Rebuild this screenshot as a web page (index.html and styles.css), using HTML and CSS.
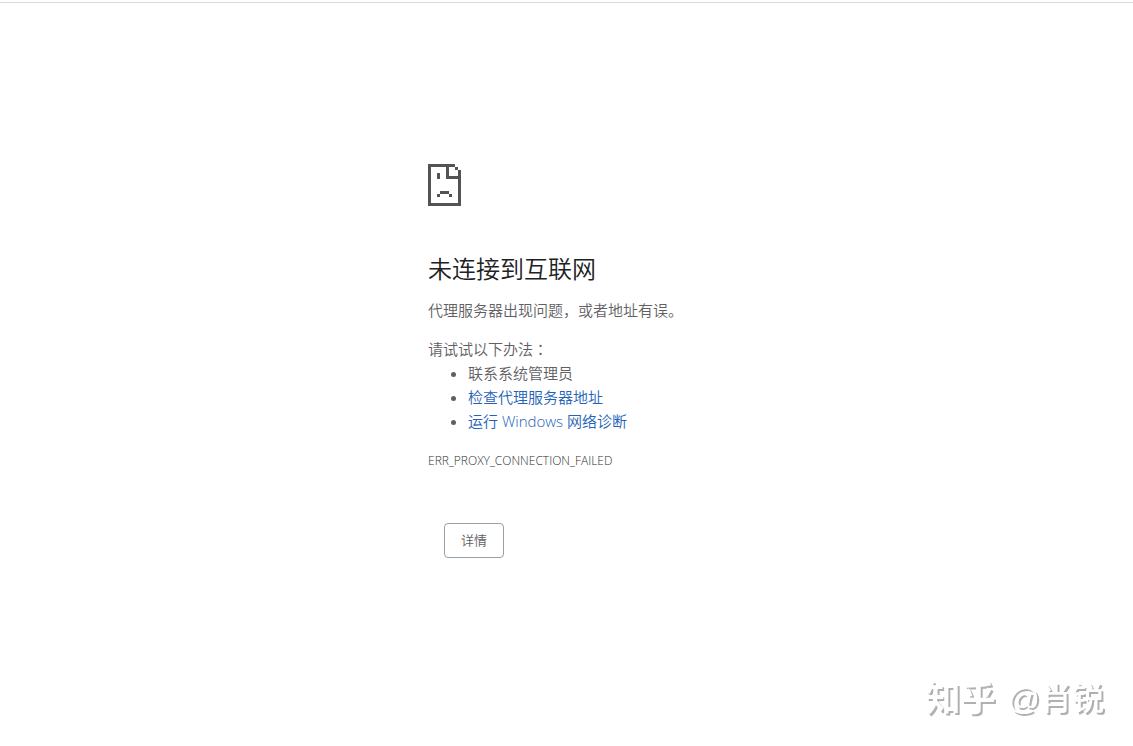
FILE: index.html
```
<!DOCTYPE html>
<html lang="zh-CN">

<head>
    <meta charset="utf-8">
    <meta name="viewport" content="width=device-width, initial-scale=1.0">
    <title>未连接到互联网</title>
    <link rel="stylesheet" href="styles.css">
</head>

<body>
    <main class="error">
        <svg class="error_icon" viewBox="0 0 11 14" shape-rendering="crispEdges" aria-hidden="true">
            <path d="M0 0h9v1h1v1h1v12H0zM1 1v12h9V5H6V1zM7 1v3h3V2H9V1z" fill-rule="evenodd" />
            <path d="M3 3h1v2H3zM4 9h3v1H4zM3 10h1v1H3zM7 10h1v1H7z" />
        </svg>

        <h1>未连接到互联网</h1>
        <p>代理服务器出现问题，或者地址有误。</p>

        <div class="suggestions">
            <p>请试试以下办法<span class="mark" lang="zh-TW">：</span></p>
            <ul>
                <li>联系系统管理员</li>
                <li><a href="#">检查代理服务器地址</a></li>
                <li><a href="#">运行 Windows 网络诊断</a></li>
            </ul>
        </div>

        <div class="error_code">ERR_PROXY_CONNECTION_FAILED</div>
        <button type="button">详情</button>
    </main>

    <div class="watermark"><span class="logo">知乎</span><span>@肖锐</span></div>
</body>

</html>
```

FILE: styles.css
```
body {
    margin: 0;
    padding-top: 2px;
    background-color: #fff;
    color: #5f6063;
    font-family: "Open Sans", "Noto Sans CJK SC", sans-serif;
    font-size: 15px;
    font-weight: 350;
    line-height: 24px;
}

body::before {
    content: "";
    display: block;
    height: 1px;
    background-color: #dadada;
}

/* --------- ERROR --------------- */
.error {
    max-width: 277px;
    margin: 0 auto;
    padding-top: 161px;
}

.error_icon {
    display: block;
    width: 33px;
    height: 42px;
    fill: #535353;
}

h1 {
    margin: 48px 0 15px;
    color: #202124;
    font-size: 24px;
    font-weight: 350;
    line-height: 29px;
}

p {
    margin: 0;
}

/* centred punctuation */
.mark {
    font-family: "Noto Sans CJK TC", sans-serif;
}

.suggestions {
    margin-top: 15px;
}

.suggestions ul {
    margin: 0;
    padding-left: 40px;
}

a {
    color: #2462b8;
    text-decoration: none;
}

a:hover {
    text-decoration: underline;
}

.error_code {
    margin-top: 16px;
    color: #303134;
    font-size: 12px;
}

button {
    display: block;
    margin: 50px 0 0 16px;
    padding: 6px 16px;
    border: 1px solid #9aa0a6;
    border-radius: 4px;
    background-color: #fff;
    color: #5f6063;
    font-family: inherit;
    font-size: 13px;
    font-weight: 350;
    line-height: 21px;
    cursor: pointer;
}

/* --------- WATERMARK --------------- */
.watermark {
    position: fixed;
    right: 29px;
    bottom: 23px;
    display: flex;
    gap: 12px;
    color: #fff;
    font-family: "Liberation Sans", "Noto Sans CJK SC", sans-serif;
    font-size: 32px;
    font-weight: 500;
    line-height: 48px;
    text-shadow: 2px 2px 0 #b0b0b0;
}

.watermark .logo {
    font-size: 35px;
    font-weight: 700;
}
```
